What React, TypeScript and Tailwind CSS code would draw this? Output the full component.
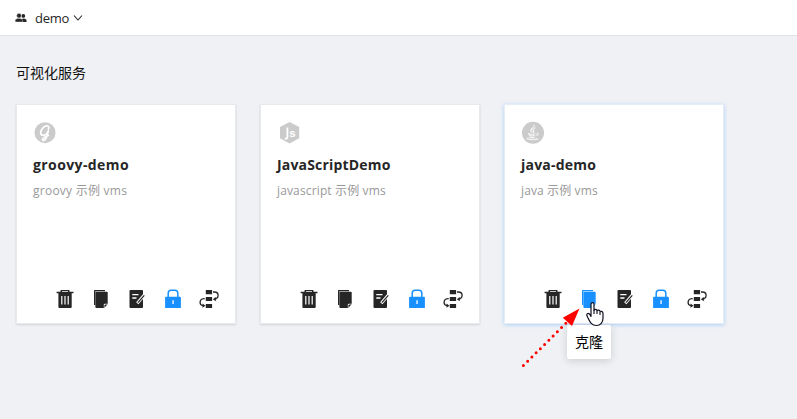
import React from "react";
import { FaJava } from "react-icons/fa";

type Kind = "groovy" | "node" | "java";

function ServiceLogo({ kind }: { kind: Kind }) {
  return (
    <svg viewBox="0 0 24 24" className="block h-6 w-6" fill="#cbcbcb">
      {kind === "groovy" && (
        <>
          <circle cx="12" cy="12.700" r="10.500" />
          <path d="M15.200 9.500c2.300-4-2.400-5-5.600-1.200-2.800 3.500-2.400 7 .4 7 2.400 0 4.700-2.400 5.300-4.600l-1.700 6.300c-.9 3.400-4.200 4.200-4.100 2.200.1-1.500 3-2.500 6.500-4.200" fill="none" stroke="#fff" strokeWidth="1.700" strokeLinejoin="round" />
        </>
      )}
      {kind === "node" && (
        <>
          <path d="M12.600 1.900l9.600 5.200v11.200l-9.600 5.200L3 18.300V7.100z" />
          <path d="M10.400 7.500v9.800q0 2-2.600 1" fill="none" stroke="#fff" strokeWidth="1.800" />
          <text x="12.200" y="17" fill="#fff" fontSize="11.500" fontWeight="700" className="font-['Liberation_Sans',sans-serif]">s</text>
        </>
      )}
      {kind === "java" && (
        <>
          <circle cx="12" cy="12.700" r="11" />
          <FaJava x="3.500" y="4.300" width="17" height="16" color="#fff" stroke="#fff" strokeWidth="10" />
        </>
      )}
    </svg>
  );
}

const icon = "block h-5 w-5";

function TrashIcon() {
  return (
    <svg viewBox="0 0 20 20" className={icon} fill="#262626">
      <path d="M5.500 2.800V1.500q0-.5.500-.5h8q.5 0 .5.500v1.300h4v1.500h-1.800V18q0 1-1 1H4.400q-1 0-1-1V4.300H1.600V2.800zM7 2.800h6V2H7zM6.200 7v8.500h1.200V7zm3.200 0v8.500h1.200V7zm3.200 0v8.500h1.200V7z" fillRule="evenodd" />
    </svg>
  );
}

function CopyIcon({ active }: { active?: boolean }) {
  return (
    <svg viewBox="0 0 20 20" className={icon} fill={active ? "#1890ff" : "#262626"}>
      <path d="M3 1.500q0-.5.500-.5H14v1.200H4.300V16H3z" />
      <path d="M5.400 2.700h10.300q1 0 1 1V15L13 19H5.400q-1 0-1-1V3.700q0-1 1-1z" />
      <path d="M12.800 19v-3.200q0-1 1-1h3z" fill="#fff" />
      <path d="M13.500 18.500v-2.200q0-.8.800-.8h2z" />
    </svg>
  );
}

function EditIcon() {
  return (
    <svg viewBox="0 0 20 20" className={icon}>
      <path d="M3.500 1H15q1 0 1 1v16q0 1-1 1H3.500q-1 0-1-1V2q0-1 1-1z" fill="#262626" />
      <path d="M5.300 5.700h6.200M5.300 9h4.200" stroke="#fff" strokeWidth="1.300" />
      <path d="M17.300 6L10.300 14.300" stroke="#fff" strokeWidth="3" fill="none" />
      <path d="M17.300 6.300L10.900 13.700" stroke="#262626" strokeWidth="1.200" />
    </svg>
  );
}

function LockIcon() {
  return (
    <svg viewBox="0 0 20 20" className={icon}>
      <path d="M5.200 9V4.200q0-3 3-3h3.600q3 0 3 3V9" fill="none" stroke="#1890ff" strokeWidth="1.500" />
      <path d="M3 7.700h14q.9 0 .9 1v9.500q0 .9-.9.900H3q-.9 0-.9-.9V8.700q0-1 .9-1zm6.400 3.500v3.800h1.300v-3.800z" fill="#1890ff" fillRule="evenodd" />
    </svg>
  );
}

function FlowIcon() {
  return (
    <svg viewBox="0 0 20 20" className={icon} fill="#262626">
      <path d="M6.800 1h6.300v4.200H6.800zM6.800 8h6.300v4H6.800zM6.800 15h6.300v4H6.800z" />
      <path d="M14 3h1.500c4.800 0 4.800 6.500 0 7.100M5.700 9.700H4.800c-4.800.4-4.800 6.400-.8 6.900" fill="none" stroke="#262626" strokeWidth="1.300" />
      <path d="M13.800 10.200l3-2.100v4.200zM6.500 16.700l-3-2.200v4.300z" />
    </svg>
  );
}

function ServiceCard({ kind, name, desc, nameClass, descClass, active }: { kind: Kind; name: string; desc: string; nameClass: string; descClass: string; active?: boolean }) {
  return (
    <article className={`flex h-[220px] w-[220px] shrink-0 flex-col justify-between border bg-white px-4 pt-[15px] pb-[14px] ${active ? "border-[#e6edf5] shadow-[0_1px_4px_rgba(24,144,255,0.32)]" : "border-[#e8e9ec] shadow-[0_1px_2px_rgba(0,0,0,0.13)]"}`}>
      <div>
        <ServiceLogo kind={kind} />
        <h2 className={`mt-[10px] w-max text-[14px] leading-[22px] font-bold text-[#262626] ${nameClass}`}>{name}</h2>
        <p className={`mt-[5px] w-max text-[12px] leading-5 text-[#999] ${descClass}`}>{desc}</p>
      </div>
      <div className="flex justify-end gap-4">
        <TrashIcon />
        <CopyIcon active={active} />
        <EditIcon />
        <LockIcon />
        <FlowIcon />
      </div>
    </article>
  );
}

export default function App() {
  return (
    <div className="relative flex h-[419px] w-[797px] flex-col overflow-hidden bg-[#f0f1f5] font-['Open_Sans','Noto_Sans_CJK_SC',sans-serif]">
      <header className="flex h-9 shrink-0 items-center border-b border-[#dfe1e6] bg-white pl-[15px] text-[13px] text-[#262626]">
        <svg viewBox="0 0 12 12" className="h-3 w-3" fill="#262626">
          <circle cx="8.300" cy="3.900" r="1.900" />
          <path d="M6.500 10V8.200q0-1.600 2-1.800 3 .2 3 2.200V10z" />
          <circle cx="4" cy="3.700" r="2.400" stroke="#fff" strokeWidth=".5" />
          <path d="M.2 10V8.500q0-2 3.700-2.200 3.700.2 3.700 2.200V10z" stroke="#fff" strokeWidth=".4" />
        </svg>
        <span className="ml-2 leading-5 tracking-[-0.3px]">demo</span>
        <svg viewBox="0 0 10 8" className="ml-1 h-2 w-[10px]" fill="none" stroke="#262626" strokeWidth="1.100">
          <path d="M1 1.500l4 4.500 4-4.500" />
        </svg>
      </header>
      <main className="px-4 pt-[26px]">
        <h1 className="text-[14px] leading-[22px] text-[#111]">可视化服务</h1>
        <div className="mt-5 flex gap-6">
          <ServiceCard kind="groovy" name="groovy-demo" desc="groovy 示例 vms" nameClass="tracking-[0.4px]" descClass="tracking-[0.25px]" />
          <ServiceCard kind="node" name="JavaScriptDemo" desc="javascript 示例 vms" nameClass="tracking-[0.18px]" descClass="tracking-[0.14px]" />
          <ServiceCard kind="java" name="java-demo" desc="java 示例 vms" nameClass="tracking-[0.22px]" descClass="tracking-[0.12px]" active />
        </div>
      </main>
      <div className="absolute top-[325px] left-[567px] flex h-[34px] w-11 items-center justify-center rounded-[2px] bg-white pb-px text-[14px] text-black shadow-[0_2px_8px_rgba(0,0,0,0.15)]">克隆</div>
      <svg viewBox="0 0 100 100" className="absolute top-[285px] left-[515px] h-[100px] w-[100px]">
        <path d="M8.400 80.600L54 35" stroke="#f00" strokeWidth="3" strokeLinecap="round" strokeDasharray="0 6" />
        <path d="M64.500 23.500L47.800 32.800 57 41z" fill="#f00" />
        <path d="M76 31.500V19.300q0-1.600 1.500-1.600t1.500 1.600v6q.2-1 1.500-.9t1.500 1.300q.4-.8 1.600-.6t1.500 1.500q.4-.6 1.500-.2t1.400 1.700v5.100c0 4-2.500 7.300-6.500 7.300-5 0-6.500-3.300-9.400-9.500q-.9-2 .7-2.500t3.200 3z" fill="#fff" stroke="#101020" strokeWidth="1.200" strokeLinejoin="round" />
        <path d="M79 25v4M82 26v3M85 27v3" stroke="#101020" strokeWidth="1.100" />
      </svg>
    </div>
  );
}
